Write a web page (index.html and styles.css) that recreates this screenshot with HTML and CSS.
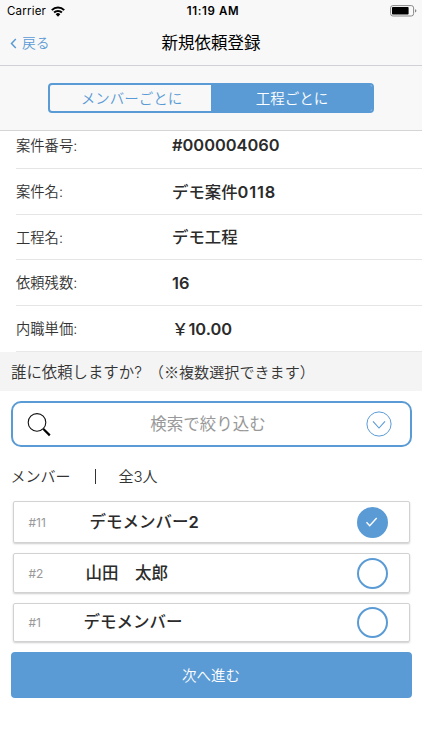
FILE: index.html
```html
<!DOCTYPE html>
<html lang="ja">
<head>
<meta charset="utf-8">
<title>新規依頼登録</title>
<link rel="stylesheet" href="styles.css">
</head>
<body>
<header class="top">
  <div class="status">
    <div class="carrier"><span>Carrier</span>
      <svg width="14" height="11" viewBox="0 0 14 11"><g fill="none" stroke="#000" stroke-width="2"><path d="M.8 4.1a8.8 8.8 0 0 1 12.4 0"/><path d="M3.1 6.5a5.5 5.5 0 0 1 7.8 0"/></g><path d="M7 10.7 4.7 8.2a3.3 3.3 0 0 1 4.6 0z"/></svg>
    </div>
    <div class="time">11:19 AM</div>
    <svg class="battery" width="27" height="12" viewBox="0 0 27 12"><rect x=".6" y=".6" width="23" height="10.4" rx="2.3" fill="none" stroke="#888" stroke-width="1"/><rect x="2" y="2" width="16.6" height="7.6" rx=".8"/><path d="M25 4.2q1.4.3 1.4 1.6T25 7.4z" fill="#888"/></svg>
  </div>
  <nav class="nav">
    <a class="back"><svg width="7" height="11" viewBox="0 0 7 11"><path d="M5.8 1 1.5 5.5 5.8 10" fill="none" stroke="#5b9bd5" stroke-width="1.5"/></svg><span>戻る</span></a>
    <h1>新規依頼登録</h1>
    <span></span>
  </nav>
</header>
<div class="tabs"><div class="segment"><span>メンバーごとに</span><span class="on">工程ごとに</span></div></div>
<dl class="details">
  <div class="row first"><dt>案件番号:</dt><dd><span class="num">#000004060</span></dd></div>
  <div class="row"><dt>案件名:</dt><dd>デモ案件<span class="num wide">0118</span></dd></div>
  <div class="row short"><dt>工程名:</dt><dd>デモ工程</dd></div>
  <div class="row"><dt>依頼残数:</dt><dd><span class="num">16</span></dd></div>
  <div class="row"><dt>内職単価:</dt><dd><span class="yen">￥</span><span class="num">10.00</span></dd></div>
</dl>
<h2 class="section"><span>誰に依頼しますか?</span><span class="note">（※複数選択できます）</span></h2>
<main>
  <div class="search">
    <svg width="26" height="26" viewBox="0 0 26 26"><circle cx="10" cy="11.4" r="8.8" fill="none" stroke="#111" stroke-width="1.1"/><path d="m16.4 18 6.4 6.4" stroke="#000" stroke-width="2.2"/></svg>
    <span>検索で絞り込む</span>
    <svg width="26" height="26" viewBox="0 0 26 26"><g fill="none" stroke="#5b9bd5"><circle cx="13" cy="13" r="12.1"/><path d="m7 10.4 6 6.6 6-6.6" stroke-width="1.1"/></g></svg>
  </div>
  <div class="count"><span>メンバー</span><i></i><span>全3人</span></div>
  <div class="cards">
    <div class="card tall"><small>#11</small><b class="m1">デモメンバー<span class="num">2</span></b><span class="radio checked"><svg width="14" height="12" viewBox="0 0 14 12"><path d="m1.5 6.2 3.2 3.5 7-7.7" fill="none" stroke="#fff" stroke-width="1.4"/></svg></span></div>
    <div class="card"><small>#2</small><b class="m2">山田　太郎</b><span class="radio"></span></div>
    <div class="card last"><small>#1</small><b class="m3">デモメンバー</b><span class="radio"></span></div>
  </div>
  <button class="next">次へ進む</button>
</main>
</body>
</html>
```
FILE: styles.css
```css
* { box-sizing: border-box; }
body { margin: 0; height: 750px; background: #fff; color: #333; font-family: Inter, "Noto Sans CJK JP", sans-serif; overflow: hidden; }
svg { display: block; flex: none; }
.top { height: 66px; background: #f8f8f8; border-bottom: 1px solid #d0d0d6; }
.status { height: 22px; display: grid; grid-template-columns: 1fr auto 1fr; align-items: center; padding: 0 5px 0 7px; color: #000; font-size: 11.5px; }
.carrier { display: flex; align-items: center; gap: 5px; letter-spacing: .2px; }
.time { font-weight: 600; letter-spacing: .6px; padding-left: 2px; }
.battery { justify-self: end; }
.nav { height: 43px; display: grid; grid-template-columns: 1fr auto 1fr; align-items: center; padding: 0 10px; }
.back { display: flex; align-items: center; gap: 5px; color: #5b9bd5; font-size: 13.8px; font-weight: 350; }
.back span { padding-bottom: 3px; }
h1 { margin: 0; padding-bottom: 1px; color: #000; font-size: 16.5px; font-weight: 400; line-height: 24px; }
.tabs { height: 65px; background: #f8f8f8; border-bottom: 1px solid #d5d5d5; padding: 17px 48px 0; }
.segment { display: grid; grid-template-columns: 1fr 1fr; height: 30px; border: 2px solid #5b9bd5; border-radius: 4px; overflow: hidden; font-size: 14.5px; font-weight: 350; color: #5b9bd5; }
.segment span { display: flex; align-items: center; justify-content: center; padding: 0 0 2px 2px; }
.segment .on { background: #5b9bd5; color: #fff; padding-left: 1px; }
.details { margin: 0 0 0 16px; }
.row { display: grid; grid-template-columns: 156px 1fr; align-items: center; height: 46px; border-bottom: 1px solid #e5e5e5; }
.row.first { height: 38px; padding-bottom: 9px; }
.row.short { height: 45px; }
.row:last-child { height: 46px; border-color: #e8e8e8; }
dt { padding-bottom: 2px; font-size: 14.3px; font-weight: 350; }
.first dt { padding-bottom: 1px; }
dd { margin: 0; font-size: 16.4px; font-weight: 500; color: #2b2b2b; line-height: 24px; }
.num { font-weight: 600; }
.wide { letter-spacing: .8px; }
.yen { font-family: "Noto Sans CJK JP", sans-serif; }
.section { display: flex; align-items: center; gap: 7px; height: 39px; margin: 0; padding: 0 0 2px 11px; background: #f4f4f4; font-size: 15.4px; font-weight: 350; }
.note { font-family: "Noto Sans CJK JP", sans-serif; font-size: 15.1px; line-height: 20px; }
main { padding: 10px 10.5px 0; }
.search { display: flex; align-items: center; justify-content: space-between; height: 46px; border: 2px solid #5b9bd5; border-radius: 10px; padding: 0 18px 0 14px; color: #999; font-size: 16.5px; font-weight: 400; }
.search span { padding: 0 2px 3px 0; }
.count { display: flex; align-items: center; height: 54px; padding-top: 4px; font-size: 15px; font-weight: 350; }
.count span { padding-bottom: 2px; }
.count i { width: 1px; height: 15px; margin: 0 23px 0 24px; background: #333; }
.cards { display: grid; gap: 10px; padding: 0 2px; }
.card { display: grid; grid-template-columns: 57px 1fr 31px; align-items: center; height: 40px; padding: 0 21px 0 15px; border: 1px solid #d2d2d2; border-radius: 2px; box-shadow: 0 1px 2px #0003; }
.card.tall { height: 42px; }
.card.last { height: 39px; grid-template-columns: 55px 1fr 31px; }
small { font-size: 12px; color: #999; font-weight: 400; }
b { padding-bottom: 1px; font-size: 16.5px; font-weight: 500; color: #2b2b2b; line-height: 24px; }
.m1 { padding-left: 4px; }
.radio { display: flex; align-items: center; justify-content: center; width: 31px; height: 31px; border: 2px solid #5b9bd5; border-radius: 50%; }
.checked { background: #5b9bd5; }
.next { display: block; width: 100%; height: 46px; margin-top: 10px; padding: 0 0 2px; border: 0; border-radius: 4px; background: #5b9bd5; color: #fff; font: 350 14.5px "Noto Sans CJK JP", sans-serif; }
```
